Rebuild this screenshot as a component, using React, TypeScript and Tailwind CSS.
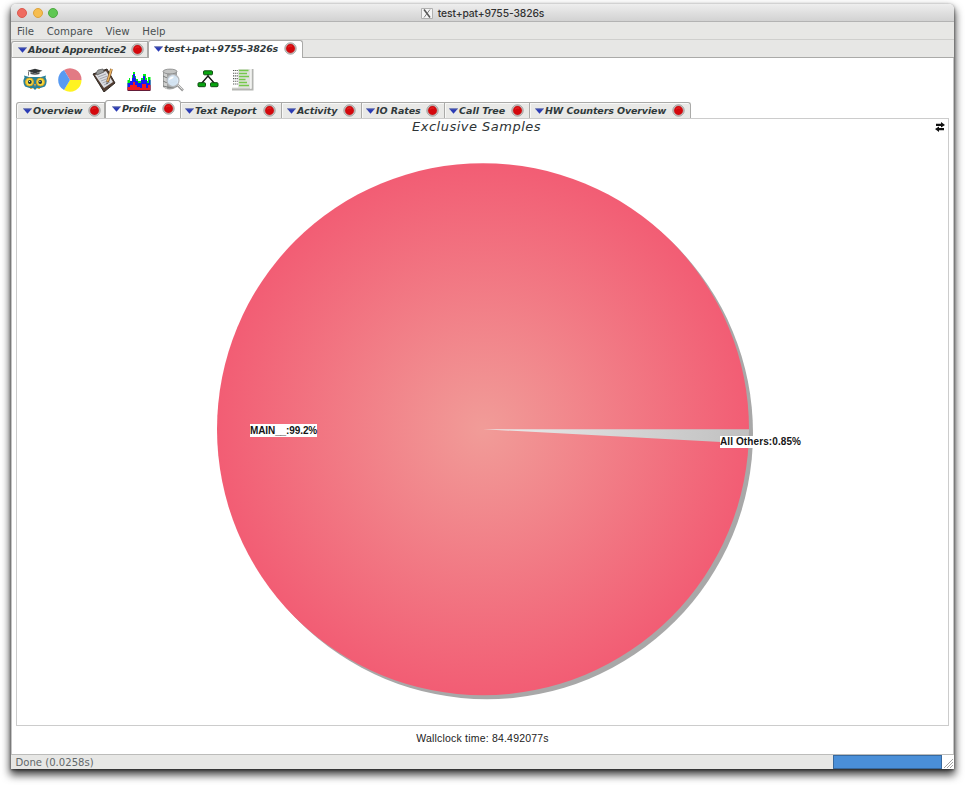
import React from "react";

const dejavu = "font-['DejaVu_Sans',sans-serif]";
const helvetica = "font-['Liberation_Sans',sans-serif]";

function Triangle() {
  return (
    <svg className="h-[6px] w-[9px] shrink-0" viewBox="0 0 9 6">
      <path d="M0 .5H9L4.5 5.7Z" fill="#2b3bb5" />
      <path d="M0 .5H9L8.5 1.3H.6Z" fill="#7580a8" />
    </svg>
  );
}

function CloseDot() {
  return (
    <svg className="h-[13px] w-[13px] shrink-0" viewBox="0 0 13 13">
      <circle cx="6.5" cy="6.5" r="5.7" fill="#d4d4d2" stroke="#999996" strokeWidth=".9" />
      <circle cx="6.5" cy="6.5" r="4.4" fill="#d5070c" stroke="#b0282b" strokeWidth=".5" />
      <path d="M4 5.2Q5.8 3 8.2 4.2" stroke="#e82a2a" fill="none" />
    </svg>
  );
}

type TabProps = { label: string; box: string; text: string; active?: boolean };

function Tab({ label, box, text, active }: TabProps) {
  return (
    <div
      className={`flex shrink-0 items-center border-t border-r border-[#aaaaa8] ${
        active ? "h-[18px] rounded-t-[3px] border-l bg-white pb-[2px]" : "h-[16px] bg-[#e9e9e7] shadow-[inset_1px_1px_0_#f8f8f7]"
      } ${box}`}
    >
      <Triangle />
      <span className={`ml-px shrink-0 whitespace-nowrap text-[9.5px] leading-[14px] font-bold italic text-[#30393b] ${dejavu} ${text}`}>
        {label}
      </span>
      <CloseDot />
    </div>
  );
}

function OwlIcon() {
  return (
    <svg className="h-6 w-6" viewBox="0 0 24 24">
      <path d="M1.5 9.5L1 7.5 6 9H18L23 7.5 22.5 9.5Q25 14 22 18.5L17.5 20H14L12 22 10 20H6.5L2 18.5Q-1 14 1.5 9.5Z" fill="#2b8297" />
      <path d="M4.5 2.8L12 .8 19.5 2.8 12 5.5Z" fill="#323638" />
      <path d="M7.5 4V6Q12 7.5 16.5 6V4L12 5.5Z" fill="#4c5053" />
      <path d="M5.5 3.5V7.5" stroke="#555" strokeWidth=".8" />
      <circle cx="6.5" cy="14" r="4" fill="#f9dc3c" stroke="#d9a021" strokeWidth=".9" />
      <circle cx="17.5" cy="14" r="4" fill="#f9dc3c" stroke="#d9a021" strokeWidth=".9" />
      <circle cx="6.8" cy="14" r="1.9" fill="#183d49" />
      <circle cx="17.2" cy="14" r="1.9" fill="#183d49" />
      <circle cx="6.5" cy="13.5" r=".6" fill="#fff" />
      <circle cx="16.9" cy="13.5" r=".6" fill="#fff" />
      <path d="M11 16L12 19 13 16Z" fill="#f3a338" />
      <path d="M7 20.5H9.5M14.5 20.5H17" stroke="#e6ad3c" strokeWidth="1" />
    </svg>
  );
}

function PieIcon() {
  return (
    <svg className="h-6 w-6" viewBox="0 0 24 24">
      <path d="M12 12L6 2A11.5 11.5 0 0 1 23.5 12Z" fill="#e27a84" />
      <path d="M12 12H23.5A11.5 11.5 0 0 1 6 22Z" fill="#fff322" />
      <path d="M12 12L6 22A11.5 11.5 0 0 1 6 2Z" fill="#579af2" />
    </svg>
  );
}

function ClipboardIcon() {
  return (
    <svg className="h-6 w-6" viewBox="0 0 24 24">
      <path d="M1 6L15 1 23 15 12 24Z" fill="#533e32" stroke="#302923" />
      <path d="M3 7L14 3 21 14 12 20Z" fill="#dcdde1" />
      <path d="M6 9L14 6M7.5 11L15.5 8M9 13L17 10M10.5 15L18 12M12 17L18 14" stroke="#9698a1" strokeWidth=".8" />
      <path d="M4 5L6 2 11 1 12 4 5 7Z" fill="#969898" stroke="#555" strokeWidth=".7" />
      <path d="M19.5 1L15.5 14" stroke="#71431f" strokeWidth="2.6" />
      <path d="M19.5 1L15.5 13.5" stroke="#e9b561" strokeWidth="1.6" />
      <path d="M14.7 14L14.5 16.5 16 15" fill="#333" />
    </svg>
  );
}

function HistogramIcon() {
  return (
    <svg className="h-6 w-6" viewBox="0 0 24 24">
      <path d="M.5 22V12H2V10H3V14H5V7H6V4H8V8H9V11H11V13H14V10H16V6H19V10H20V13H21V9H23.5V22Z" fill="#00ef18" />
      <path d="M.5 22V15H3V13H5V10H6V6H8V10H9V13H11V15H14V12H16V8H18V12H20V15H22V12H23.5V22Z" fill="#1719f2" />
      <path d="M.5 22V19H3V17H6V14H8V17H10V19H13V20H15V16H19V20H21V17H23.5V22Z" fill="#f11b20" />
      <path d="M.5 22.5H23.5" stroke="#641b38" />
    </svg>
  );
}

function SearchDataIcon() {
  return (
    <svg className="h-6 w-6" viewBox="0 0 24 24">
      <path d="M2 3V19Q8 24 16 19V3Z" fill="#a1a3a2" />
      <path d="M3 4V19Q4 21 6 21V4Z" fill="#d0d1d0" />
      <path d="M2 8Q8 12 16 8M2 13Q8 17 16 13M2 18Q8 21 16 18" stroke="#7a7d7d" fill="none" />
      <ellipse cx="9" cy="3.5" rx="7" ry="2.4" fill="#c4c5c4" stroke="#858786" strokeWidth=".8" />
      <path d="M16.5 17L22 22.5" stroke="#9a9a9a" strokeWidth="2.5" />
      <path d="M17 17L21.5 21.5" stroke="#e4e4e2" strokeWidth="1" />
      <circle cx="12" cy="12.5" r="6" fill="#d8e9f8" fillOpacity=".92" stroke="#b5b8bb" strokeWidth="1.2" />
      <path d="M8 12Q8 8.5 12.5 8.5Q13.5 10 8 12" fill="#fff" />
    </svg>
  );
}

function TreeIcon() {
  return (
    <svg className="h-6 w-6" viewBox="0 0 24 24">
      <path d="M12 6V8L5 16M12 8L19 16" stroke="#151515" strokeWidth="1.4" fill="none" />
      <rect x="7.5" y="2.8" width="9" height="4" rx="1" fill="#08a510" stroke="#104a13" />
      <rect x="2" y="14.7" width="7.5" height="4" rx="1" fill="#08a510" stroke="#104a13" />
      <rect x="14.5" y="14.7" width="7.5" height="4" rx="1" fill="#08a510" stroke="#104a13" />
    </svg>
  );
}

function ReportIcon() {
  return (
    <svg className="h-6 w-6" viewBox="0 0 24 24">
      <path d="M1 20H19V1H22.5V22.5H1Z" fill="#b4b5b2" />
      <path d="M7 1H21V20.5H1V19.5H7Z" fill="#dfe2dc" />
      <path d="M2 2.5H7M2 5.2H7M2 7.9H7M2 10.6H7M2 13.3H7M2 16H7" stroke="#555855" strokeWidth="1.1" strokeDasharray="1.3 .8" />
      <path d="M8 2.5H17.5M8 5.5H16M8 8.5H18M8 11.5H14.5M8 14.5H16M8 17.5H18" stroke="#74c84a" strokeWidth="1.6" />
      <path d="M19.8 1V21" stroke="#fafafa" />
    </svg>
  );
}

function PieChart() {
  return (
    <svg className="block h-[607px] w-[931px]" viewBox="17 119 931 607">
      <defs>
        <radialGradient id="main-slice" gradientUnits="userSpaceOnUse" cx="483" cy="429" r="266">
          <stop offset="0" stopColor="#f19c98" />
          <stop offset="1" stopColor="#f25d74" />
        </radialGradient>
        <radialGradient id="other-slice" gradientUnits="userSpaceOnUse" cx="483" cy="429" r="266">
          <stop offset="0" stopColor="#ececec" />
          <stop offset="1" stopColor="#c0c0c0" />
        </radialGradient>
      </defs>
      <circle cx="487" cy="433.2" r="266" fill="#a8a8a8" />
      <circle cx="483" cy="429.2" r="266" fill="url(#main-slice)" />
      <path d="M483 429.2H749A266 266 0 0 1 748.6 443.4Z" fill="url(#other-slice)" />
    </svg>
  );
}

const tabs: TabProps[] = [
  { label: "Overview", box: "w-[89px] border-l rounded-tl-[3px] pl-[6px]", text: "w-[55px] tracking-[-0.08px]" },
  { label: "Profile", box: "w-[76px] pl-[6px]", text: "w-[40px] tracking-[-0.12px]", active: true },
  { label: "Text Report", box: "w-[101px] pl-[4px]", text: "w-[68px]" },
  { label: "Activity", box: "w-[80px] pl-[5px]", text: "w-[46px] tracking-[-0.03px]" },
  { label: "IO Rates", box: "w-[83px] pl-[4px]", text: "w-[50px] tracking-[-0.08px]" },
  { label: "Call Tree", box: "w-[85px] pl-[4px]", text: "w-[52px]" },
  { label: "HW Counters Overview", box: "w-[161px] pl-[5px] rounded-tr-[3px]", text: "w-[127px] tracking-[-0.12px]" },
];

export default function App() {
  return (
    <div className="h-[786px] w-[965px] overflow-hidden bg-white pt-[4px] pl-[11px]">
      <div className="flex h-[765px] w-[943px] flex-col rounded-t-[5px] bg-white shadow-[0_5px_9px_1px_rgba(0,0,0,0.75),0_1px_3px_rgba(0,0,0,0.55)]">
        <div className="relative flex h-[18px] shrink-0 items-center justify-center rounded-t-[5px] border-b border-[#b3b3b3] bg-linear-to-b from-[#eeeeee] to-[#d2d2d2]">
          <div className="absolute top-[4px] left-[6px] flex gap-[5.6px]">
            <i className="h-[10px] w-[10px] rounded-full border border-[#dc594e] bg-[#ef6b60]" />
            <i className="h-[10px] w-[10px] rounded-full border border-[#dda33c] bg-[#f6bd4f]" />
            <i className="h-[10px] w-[10px] rounded-full border border-[#4eaa42] bg-[#5fc753]" />
          </div>
          <svg className="mt-[2px] mr-[5px] h-[11px] w-[12px]" viewBox="0 0 12 11">
            <path d="M.5.5H11.5V10.5H.5Z" fill="#f5f5f5" stroke="#b1b1b1" />
            <path d="M3 1.5L9 9.5" stroke="#555" strokeWidth="1.6" />
            <path d="M9 1.5L3 9.5" stroke="#666" strokeWidth=".8" />
          </svg>
          <span className="mt-px font-['Inter',sans-serif] text-[10.3px] leading-[14px] font-medium tracking-[-0.1px] text-[#333]">
            test+pat+9755-3826s
          </span>
        </div>
        <div className={`flex h-[18px] shrink-0 gap-[12.6px] border-b border-[#cfcfcd] bg-[#e7e7e5] pt-px pl-[6px] text-[10.2px] leading-[18px] text-[#4a5052] ${dejavu}`}>
          <span>File</span>
          <span>Compare</span>
          <span>View</span>
          <span>Help</span>
        </div>
        <div className="flex h-[18px] shrink-0 items-end border-b border-[#aaaaa8] bg-[#e7e7e5]">
          <Tab label="About Apprentice2" box="w-[137px] rounded-tl-[3px] border-l pl-[6px]" text="w-[103px] tracking-[-0.14px]" />
          <div className="-mb-px flex">
            <Tab label="test+pat+9755-3826s" box="w-[155px] pl-[5px]" text="w-[120px] tracking-[-0.17px]" active />
          </div>
        </div>
        <div className="flex min-h-0 flex-1 flex-col border-x border-[#c5c5c5] bg-white px-[4px]">
          <div className="flex h-[43px] shrink-0 items-center gap-[10.6px] pl-[7px]">
            <OwlIcon />
            <PieIcon />
            <ClipboardIcon />
            <HistogramIcon />
            <SearchDataIcon />
            <TreeIcon />
            <ReportIcon />
          </div>
          <div className="flex h-[17px] shrink-0 items-end">
            {tabs.map((tab) => (
              <Tab key={tab.label} {...tab} />
            ))}
          </div>
          <div className="relative h-[608px] shrink-0 border border-[#cccccc]">
            <PieChart />
            <h1 className={`absolute top-0 left-[395px] text-[13px] leading-[16px] tracking-[0.5px] whitespace-nowrap italic text-[#2e3436] ${dejavu}`}>
              Exclusive Samples
            </h1>
            <svg className="absolute top-[3px] right-[3px] h-[10px] w-[10px]" viewBox="0 0 10 10">
              <path d="M1 1.7H6V0L10 3 6 5.5V4H1ZM9 6H4V4.5L0 7 4 10V8.3H9Z" fill="#111" />
            </svg>
            <span className={`absolute top-[305px] left-[233px] h-[13px] w-[67px] whitespace-nowrap bg-white text-[10px] leading-[13px] font-bold tracking-[-0.1px] text-[#161616] ${helvetica}`}>
              MAIN__:99.2%
            </span>
            <span className={`absolute top-[317px] left-[703px] h-[12px] w-[82px] whitespace-nowrap bg-white text-[10px] leading-[12px] font-bold tracking-[0.1px] text-[#161616] ${helvetica}`}>
              All Others:0.85%
            </span>
          </div>
          <div className={`flex flex-1 items-center justify-center pb-[2px] text-[10.5px] tracking-[0.2px] text-[#222] ${helvetica}`}>
            <span>Wallclock time: 84.492077s</span>
          </div>
        </div>
        <div className={`flex h-[15px] shrink-0 items-stretch justify-between border-t border-[#bcbcba] bg-[#e7e7e5] pl-[4.5px] text-[10.1px] leading-[14px] text-[#62676a] ${dejavu}`}>
          <span className="pt-px leading-[13px]">Done (0.0258s)</span>
          <div className="flex">
            <div className="w-[109px] border border-[#37699e] bg-[#4a8fd8]" />
            <svg className="h-[14px] w-[12px] bg-white" viewBox="0 0 12 14">
              <path d="M2 13L11 4M5 13L11 7M8 13L11 10" stroke="#a3a3a3" />
            </svg>
          </div>
        </div>
      </div>
    </div>
  );
}
